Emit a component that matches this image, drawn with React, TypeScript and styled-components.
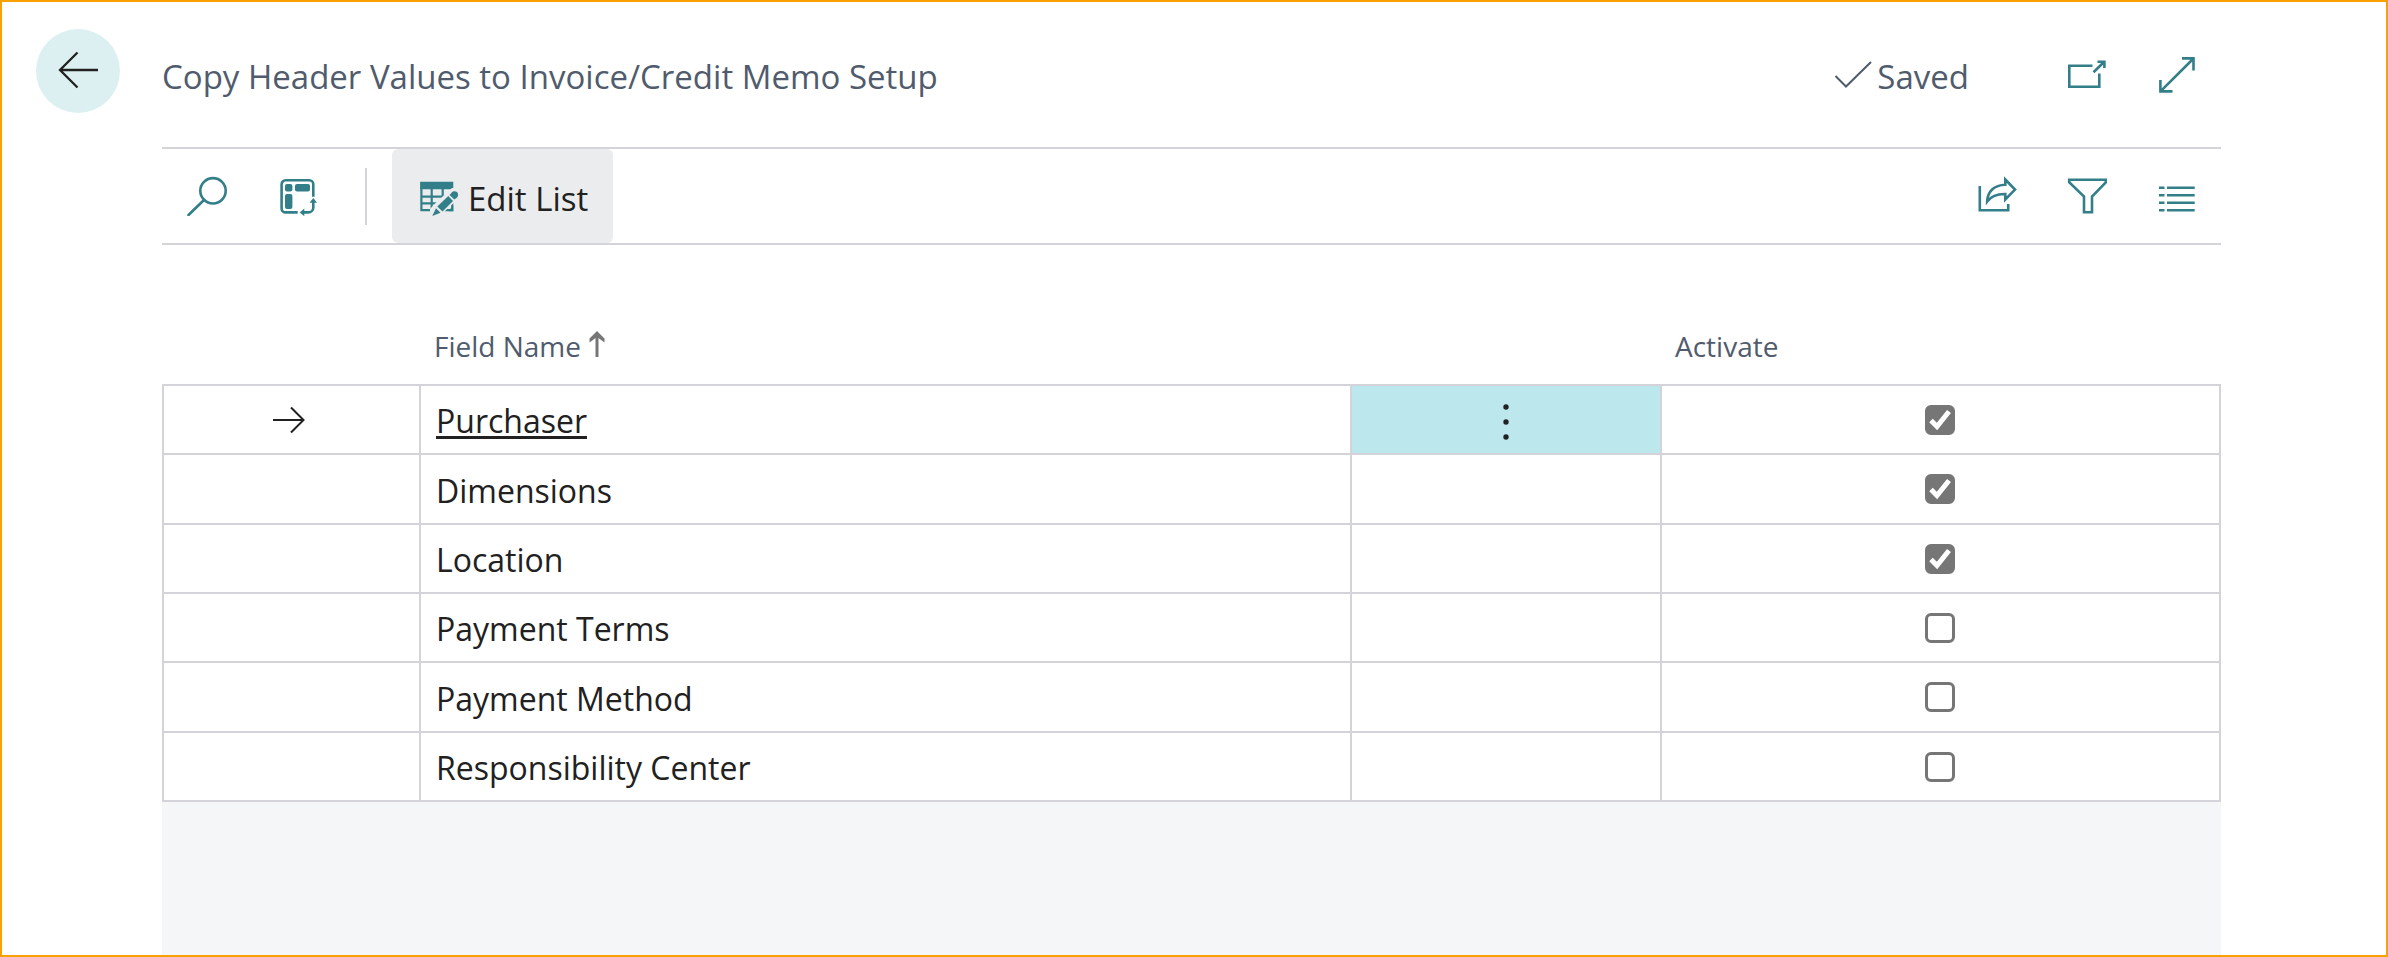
import React, { useState } from "react";
import styled, { createGlobalStyle } from "styled-components";

const color = {
  teal: "#337f89",
  ink: "#212121",
  muted: "#505c6d",
  line: "#d3d3d9",
  frame: "#f8a100",
};

const GlobalStyle = createGlobalStyle`
  *, *::before, *::after { box-sizing: border-box; }
  body {
    margin: 0;
    background: #fff;
    color: ${color.ink};
    font-family: "Segoe UI", "Open Sans", "Noto Sans", sans-serif;
    font-size: 33px;
    line-height: 44px;
  }
  button { font: inherit; color: inherit; }
`;

const Page = styled.div`
  display: grid;
  grid-template-columns: 160px minmax(0, 1fr) 165px;
  min-height: 100vh;
  border: 2px solid ${color.frame};
`;

const Side = styled.nav`
  padding: 27px 0 0 34px;
`;

const BackButton = styled.button`
  display: grid;
  place-items: center;
  width: 84px;
  height: 84px;
  padding: 0;
  border: 0;
  border-radius: 50%;
  background: #ddf0f1;
`;

const Main = styled.main`
  display: flex;
  flex-direction: column;
`;

const Header = styled.header`
  display: flex;
  align-items: center;
  height: 145px;
  color: ${color.muted};
`;

const Title = styled.h1`
  flex: 1;
  margin: 0;
  padding-top: 5px;
  font-size: inherit;
  font-weight: 400;
`;

const Status = styled.div`
  display: flex;
  align-items: center;
  gap: 4px;
  margin-right: 73px;
`;

const Label = styled.span`
  padding-top: 5px;
`;

const Toolbar = styled.div`
  display: flex;
  align-items: center;
  height: 98px;
  border-top: 2px solid ${color.line};
  border-bottom: 2px solid ${color.line};
`;

const Actions = styled.div`
  display: flex;
  margin-right: -1px;
`;

const IconButton = styled.button`
  display: grid;
  place-items: center;
  width: 90px;
  height: 94px;
  padding: 0;
  border: 0;
  background: transparent;
  color: ${color.teal};
`;

const Divider = styled.span`
  width: 2px;
  height: 57px;
  margin: 0 25px 0 23px;
  background: ${color.line};
`;

const EditButton = styled.button`
  display: flex;
  align-items: center;
  gap: 8px;
  height: 94px;
  padding: 0 25px 0 28px;
  border: 0;
  border-radius: 6px;
  background: #ebecee;
  white-space: nowrap;
  svg { color: ${color.teal}; }
`;

const Spacer = styled.span`
  flex: 1;
`;

const Table = styled.table`
  width: 100%;
  table-layout: fixed;
  border-collapse: collapse;
`;

const Col = styled.col<{ $width?: number }>`
  width: ${(p) => (p.$width ? `${p.$width}px` : "auto")};
`;

const HeadCell = styled.th`
  height: 140px;
  padding: 0 14px 16px;
  vertical-align: bottom;
  text-align: left;
  color: ${color.muted};
  font-size: 28px;
  font-weight: 400;
  svg { margin-left: 8px; }
`;

const Row = styled.tr`
  height: 69px;
  &:nth-child(3n + 2) { height: 70px; }
`;

const Cell = styled.td<{ $center?: boolean; $active?: boolean }>`
  padding: 0 16px 0 15px;
  border: 2px solid ${color.line};
  text-align: ${(p) => (p.$center ? "center" : "left")};
  background: ${(p) => (p.$active ? "#bce7ec" : "transparent")};
`;

const NameCell = styled(Cell)`
  padding-top: 3px;
  font-size: 32px;
`;

const MarkerCell = styled(Cell)`
  padding-right: 20px;
  svg { display: block; margin: 0 auto; }
`;

const FieldLink = styled.a`
  color: inherit;
  text-decoration: underline;
  text-decoration-thickness: 3px;
  text-underline-offset: 3px;
  text-decoration-skip-ink: none;
`;

const MoreButton = styled.button`
  display: block;
  width: 40px;
  height: 40px;
  margin: 0 auto;
  padding: 0;
  border: 0;
  background: transparent;
  svg { display: block; }
`;

const CheckLabel = styled.label`
  display: grid;
  justify-content: center;
  > * { grid-area: 1 / 1; }
  svg { pointer-events: none; }
`;

const CheckInput = styled.input`
  appearance: none;
  width: 30px;
  height: 30px;
  margin: 0;
  border: 3px solid #767676;
  border-radius: 6px;
  background: #fff;
  &:checked { background: #767676; }
`;

const Rest = styled.div`
  flex: 1;
  background: #f5f6f8;
`;

function Icon({ children, size = 40, stroke = 2.6 }: { children: React.ReactNode; size?: number; stroke?: number }) {
  return (
    <svg width={size} height={size} viewBox={`0 0 ${size} ${size}`} fill="none" stroke="currentColor" strokeWidth={stroke} aria-hidden="true">
      {children}
    </svg>
  );
}

const initialRows = [
  { name: "Purchaser", active: true },
  { name: "Dimensions", active: true },
  { name: "Location", active: true },
  { name: "Payment Terms", active: false },
  { name: "Payment Method", active: false },
  { name: "Responsibility Center", active: false },
];

export default function App() {
  const [rows, setRows] = useState(initialRows);
  const toggle = (name: string) =>
    setRows((all) => all.map((r) => (r.name === name ? { ...r, active: !r.active } : r)));

  return (
    <>
      <GlobalStyle />
      <Page>
        <Side>
          <BackButton aria-label="Back">
            <Icon stroke={2.3}>
              <path d="M40 19H2M19.500 1.500 2 19l17.500 17.500" />
            </Icon>
          </BackButton>
        </Side>
        <Main>
          <Header>
            <Title>Copy Header Values to Invoice/Credit Memo Setup</Title>
            <Status>
              <Icon stroke={2}>
                <path d="M2.500 21 13 31.500 38 7" />
              </Icon>
              <Label>Saved</Label>
            </Status>
            <Actions>
              <IconButton aria-label="Open in new window">
                <Icon>
                  <path d="M25.500 10.800H2.300V31.700H32.300V18.500M26.500 17.300 37 7M30.500 6.800H37.400V13" />
                </Icon>
              </IconButton>
              <IconButton aria-label="Expand">
                <Icon>
                  <path d="M3.500 36.300 36.500 3.500M25 3.400H36.500V15.500M3.400 25V36.400H15.500" />
                </Icon>
              </IconButton>
            </Actions>
          </Header>
          <Toolbar>
            <IconButton aria-label="Search">
              <Icon>
                <circle cx="26" cy="14.800" r="12.700" />
                <path d="M17 24 1.500 39" strokeLinecap="round" />
              </Icon>
            </IconButton>
            <IconButton aria-label="Change view">
              <Icon>
                <path d="M20.700 36.400H8.600a4 4 0 0 1-4-4V8.300a4 4 0 0 1 4-4H32.300a4 4 0 0 1 4 4V20.700" />
                <path d="M36.300 25V31.400a5 5 0 0 1-5 5H26" />
                <path d="M36.300 22 40 26.800H32.600ZM22.700 36.400 27.300 32.500V40.200Z" fill="currentColor" stroke="none" />
                <g fill="currentColor" stroke="none">
                  <rect x="8" y="8" width="7.400" height="7.400" rx="2" />
                  <rect x="18" y="8" width="15" height="7.400" rx="2" />
                  <rect x="8" y="18" width="7.400" height="15" rx="2" />
                </g>
              </Icon>
            </IconButton>
            <Divider />
            <EditButton>
              <Icon stroke={2.2}>
                <path d="M1.400 6V34.200H32.200V12M11.700 12V34M22.700 12V34M1 20.700H32M1 27.400H32" />
                <path d="M.3 5.700H33.300V13.200H.3Z" fill="currentColor" stroke="none" />
                <path d="M16 26.500 32 12H40V21L24 36H34V42H10V33Z" fill="#ebecee" stroke="none" />
                <path d="M33.300 29V35.300H28.500Z" fill="currentColor" stroke="none" />
                <g fill="currentColor" stroke="none">
                  <path d="M31 17.500a4 4 0 0 1 6-1.500 4 4 0 0 1-.5 6L34.300 23.500 29.500 19Z" />
                  <path d="M28.300 20 33 25 22.500 35.500 17.300 30.500Z" />
                  <path d="M16 32.300 20.500 36.700 12.300 40Z" />
                </g>
              </Icon>
              <Label>Edit List</Label>
            </EditButton>
            <Spacer />
            <Actions>
              <IconButton aria-label="Share">
                <Icon>
                  <path d="M2.800 10V34.200H31.200V28M28.300 3.500 38 13.600 28.300 23.500V18C20 17.800 14 20.500 10.200 25.500 10.500 15.500 17 9 28.300 8.700Z" />
                </Icon>
              </IconButton>
              <IconButton aria-label="Filter">
                <Icon>
                  <path d="M2.200 3.700H38.800V6.300L25 20.500V36.200H17V20.500L2.200 6.300Z" />
                </Icon>
              </IconButton>
              <IconButton aria-label="Show as list">
                <Icon>
                  <path d="M2 11.700H7.500M10 11.700H37.700M2 19.200H7.500M10 19.200H37.700M2 26.800H7.500M10 26.800H37.700M2 34.300H7.500M10 34.300H37.700" />
                </Icon>
              </IconButton>
            </Actions>
          </Toolbar>
          <Table>
            <colgroup>
              <Col $width={257} />
              <Col />
              <Col $width={310} />
              <Col $width={559} />
            </colgroup>
            <thead>
              <tr>
                <HeadCell aria-label="Current row" />
                <HeadCell>
                  Field Name
                  <svg width="16" height="26" viewBox="0 0 16 26" fill="none" stroke="#767676" strokeWidth="3" aria-label="Sorted ascending">
                    <path d="M8 26V3" />
                    <path d="M8 0 15.500 7.500V11.500L8 6 .5 11.500V7.500Z" fill="#767676" stroke="none" />
                  </svg>
                </HeadCell>
                <HeadCell aria-label="Actions" />
                <HeadCell>Activate</HeadCell>
              </tr>
            </thead>
            <tbody>
              {rows.map((row, i) => (
                <Row key={row.name}>
                  <MarkerCell>
                    {i === 0 && (
                      <Icon size={32} stroke={2}>
                        <path d="M0 16H30M18 3.500 30.500 16 18 28.500" />
                      </Icon>
                    )}
                  </MarkerCell>
                  <NameCell>{i === 0 ? <FieldLink href="#purchaser">{row.name}</FieldLink> : row.name}</NameCell>
                  <Cell $center $active={i === 0}>
                    {i === 0 && (
                      <MoreButton aria-label="More options">
                        <Icon>
                          <g fill={color.ink} stroke="none">
                            <circle cx="20" cy="7" r="2.700" />
                            <circle cx="20" cy="22" r="2.700" />
                            <circle cx="20" cy="37" r="2.700" />
                          </g>
                        </Icon>
                      </MoreButton>
                    )}
                  </Cell>
                  <Cell $center>
                    <CheckLabel>
                      <CheckInput
                        type="checkbox"
                        checked={row.active}
                        onChange={() => toggle(row.name)}
                        aria-label={`Activate ${row.name}`}
                      />
                      {row.active && (
                        <Icon size={30} stroke={5}>
                          <path d="M6 15.500 12 21.500 24 6.500" stroke="#fff" />
                        </Icon>
                      )}
                    </CheckLabel>
                  </Cell>
                </Row>
              ))}
            </tbody>
          </Table>
          <Rest />
        </Main>
      </Page>
    </>
  );
}
